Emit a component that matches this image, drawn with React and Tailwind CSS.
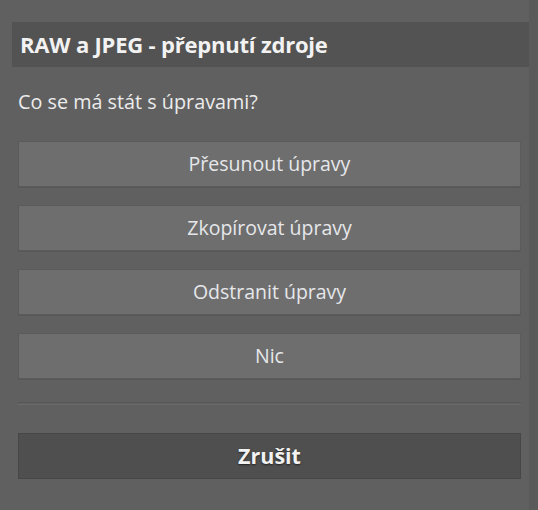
import React from 'react';

const options = ['Přesunout úpravy', 'Zkopírovat úpravy', 'Odstranit úpravy', 'Nic'];

export default function App() {
    return (
        <div className="w-[538px] h-[510px] flex bg-[#606060] overflow-hidden" style={{ fontFamily: '"Open Sans", "Noto Sans", sans-serif' }}>
            <div className="w-[529px] pt-[22px]">
                {/* Header */}
                <div className="ml-[12px] h-[45px] bg-[#535353] flex items-center pl-[8px]">
                    <h2 className="text-[22px] font-bold text-[#f2f2f2] tracking-[-0.2px]">RAW a JPEG - přepnutí zdroje</h2>
                </div>

                {/* Content */}
                <div className="pl-[18px] pr-[8px]">
                    <p className="mt-[22px] text-[19.8px] text-[#ececec] leading-[26px]">Co se má stát s úpravami?</p>

                    <div className="mt-[26px] flex flex-col gap-[18px]">
                        {options.map((label) => (
                            <button
                                key={label}
                                className="h-[46px] w-full bg-[#6e6e6e] border border-[#5b5b5b] rounded-[2px] text-[19.5px] text-[#e6e7ea] shadow-[0_1px_0_#575757]"
                            >
                                {label}
                            </button>
                        ))}
                    </div>

                    <div className="mt-[23px] h-[3px] border-t border-[#575757] border-b border-b-[#6a6a6a]" />

                    <button className="mt-[28px] h-[46px] w-full bg-[#4f4f4f] border border-[#474747] text-[21.5px] font-bold text-[#f2f2f2] [text-shadow:0_1px_2px_#222]">
                        Zrušit
                    </button>
                </div>
            </div>
            <div className="flex-1 bg-[#5a5a5a]" />
        </div>
    );
}
